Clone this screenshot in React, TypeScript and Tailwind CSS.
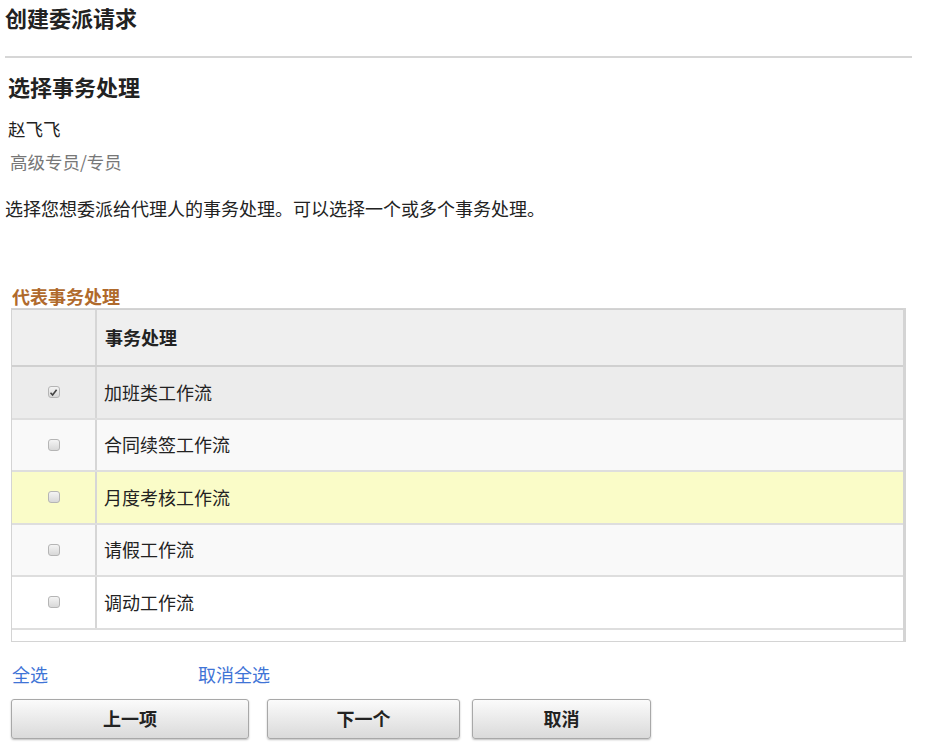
import React, { useState } from 'react'

const rows = [
    { name: '加班类工作流', bg: 'bg-[#ececec]' },
    { name: '合同续签工作流', bg: 'bg-[#f9f9f9]' },
    { name: '月度考核工作流', bg: 'bg-[#fafcc8]' },
    { name: '请假工作流', bg: 'bg-[#f9f9f9]' },
    { name: '调动工作流', bg: 'bg-white' },
]

function Box({ checked }: { checked: boolean }) {
    return (
        <span className="flex h-[12px] w-[12px] items-center justify-center rounded-[3px] border border-[#b5b5b5] bg-gradient-to-b from-[#f4f4f4] to-[#d8d8d8]">
            {checked && (
                <svg width="9" height="9" viewBox="0 0 9 9">
                    <path d="M1.5 4.8 L3.6 7 L7.6 1.8" fill="none" stroke="#444" strokeWidth="1.6" />
                </svg>
            )}
        </span>
    )
}

export default function App() {
    const [checked, setChecked] = useState([true, false, false, false, false])

    const toggle = (i: number) => setChecked(c => c.map((v, j) => (j === i ? !v : v)))

    return (
        <div className="min-h-[745px] bg-white pl-[5px] text-[#222] font-['Noto_Sans_CJK_SC',sans-serif]">
            <h1 className="text-[22px] font-bold leading-[34px]">创建委派请求</h1>
            <div className="mt-[22px] mr-[13px] h-[2px] bg-[#d6d6d6]" />

            <h2 className="mt-[14px] pl-[3px] text-[22px] font-bold leading-[28px]">选择事务处理</h2>
            <div className="mt-[17px] pl-[3px] text-[17.5px] leading-[24px]">赵飞飞</div>
            <div className="mt-[9px] pl-[5px] text-[17.5px] leading-[24px] text-[#777]">高级专员/专员</div>
            <p className="mt-[22px] text-[18px] leading-[24px]">选择您想委派给代理人的事务处理。可以选择一个或多个事务处理。</p>

            <div className="mt-[64px] pl-[7px] text-[18px] font-bold leading-[24px] text-[#b06a2c]">代表事务处理</div>

            <div className="ml-[6px] w-[895px] border border-[#d4d4d4] border-r-[3px]">
                <div className="flex h-[58px] border-t border-b-2 border-[#d0d0d0] bg-[#efefef]">
                    <div className="w-[85px] border-r-2 border-[#d6d6d6]" />
                    <div className="flex items-center pl-[8px] text-[18px] font-bold">事务处理</div>
                </div>
                {rows.map((r, i) => (
                    <div key={r.name} className={`flex h-[52.5px] border-b-2 border-[#dedede] ${r.bg}`}>
                        <button
                            onClick={() => toggle(i)}
                            className="flex w-[85px] items-center justify-center border-r-2 border-[#d6d6d6]"
                        >
                            <Box checked={checked[i]} />
                        </button>
                        <div className="flex items-center pl-[7px] text-[18px]">{r.name}</div>
                    </div>
                ))}
                <div className="h-[11px] bg-white" />
            </div>

            <div className="mt-[20px] flex pl-[7px] text-[18px] leading-[24px] text-[#3f74d6]">
                <a className="w-[186px] cursor-pointer" onClick={() => setChecked(checked.map(() => true))}>全选</a>
                <a className="cursor-pointer" onClick={() => setChecked(checked.map(() => false))}>取消全选</a>
            </div>

            <div className="mt-[13px] flex pl-[6px] text-[18px] font-bold">
                <button className="h-[40px] w-[238px] rounded-[3px] border border-[#a8a8a8] bg-gradient-to-b from-[#fbfbfb] to-[#dadada] shadow-[0_1px_2px_rgba(0,0,0,0.25)]">上一项</button>
                <button className="ml-[18px] h-[40px] w-[193px] rounded-[3px] border border-[#a8a8a8] bg-gradient-to-b from-[#fbfbfb] to-[#dadada] shadow-[0_1px_2px_rgba(0,0,0,0.25)]">下一个</button>
                <button className="ml-[12px] h-[40px] w-[179px] rounded-[3px] border border-[#a8a8a8] bg-gradient-to-b from-[#fbfbfb] to-[#dadada] shadow-[0_1px_2px_rgba(0,0,0,0.25)]">取消</button>
            </div>
        </div>
    )
}
